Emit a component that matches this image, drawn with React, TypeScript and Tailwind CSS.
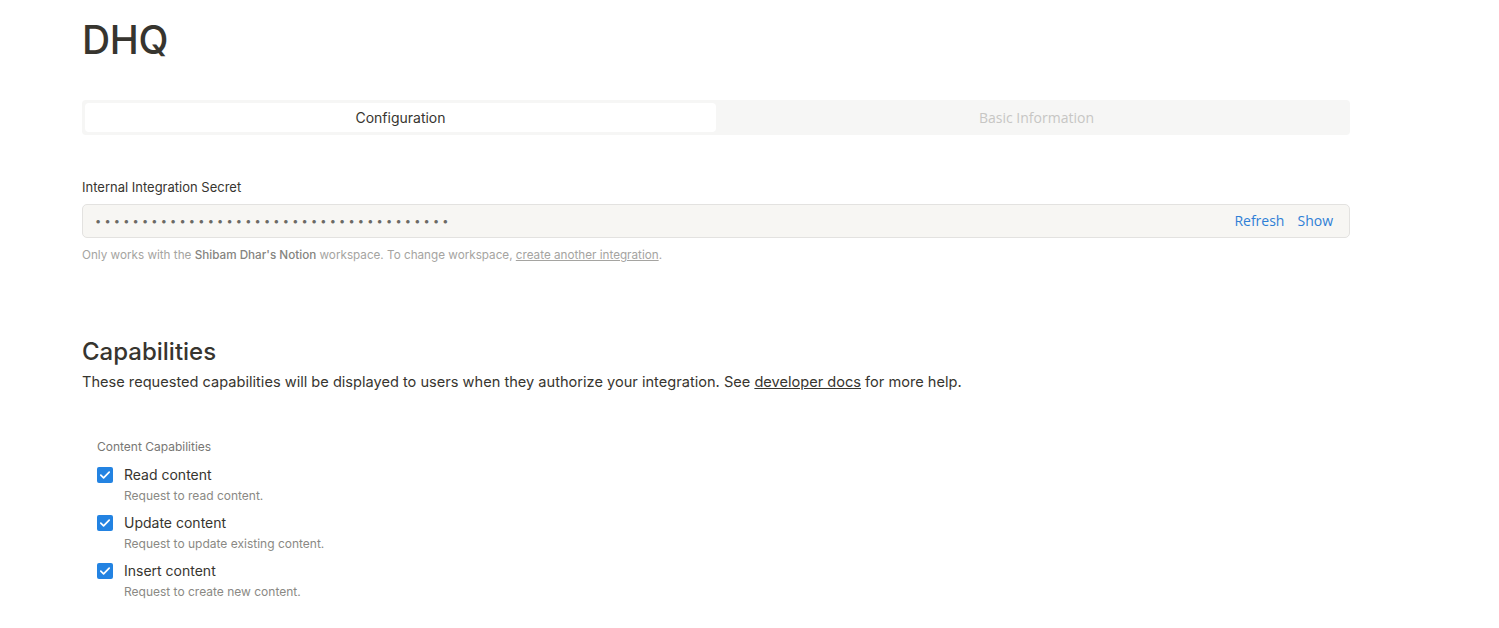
import { useState } from "react";

interface Capability {
  key: string;
  label: string;
  description: string;
}

const contentCapabilities: Capability[] = [
  { key: "read", label: "Read content", description: "Request to read content." },
  { key: "update", label: "Update content", description: "Request to update existing content." },
  { key: "insert", label: "Insert content", description: "Request to create new content." },
];

function CheckIcon() {
  return (
    <svg viewBox="0 0 16 16" className="h-4 w-4">
      <rect width="16" height="16" rx="2" fill="#2383e2" />
      <path d="M3.8 8.2l2.8 2.7 5.6-5.7" fill="none" stroke="#fff" strokeWidth="1.7" strokeLinecap="round" strokeLinejoin="round" />
    </svg>
  );
}

export default function App() {
  const [tab, setTab] = useState("config");
  const [checked, setChecked] = useState<Record<string, boolean>>({ read: true, update: true, insert: true });

  return (
    <div className="min-h-screen bg-white text-[#37352f]" style={{ fontFamily: "Inter, 'Noto Sans', sans-serif" }}>
      <div className="w-[1268px] ml-[82px] pt-[18px]">
        <h1 className="text-[39px] leading-[44px] font-medium tracking-[-0.3px]">DHQ</h1>

        {/* tabs */}
        <div className="mt-[38px] flex h-[35px] rounded-[4px] bg-[#f6f6f5] p-[3px]">
          <button
            onClick={() => setTab("config")}
            className={`flex-1 rounded-[4px] text-[14px] ${tab === "config" ? "bg-white text-[#37352f]" : "text-[#c7c6c4]"}`}
          >
            Configuration
          </button>
          <button
            onClick={() => setTab("basic")}
            className={`flex-1 rounded-[4px] text-[14px] font-['Open_Sans',sans-serif] ${tab === "basic" ? "bg-white text-[#37352f]" : "text-[#c7c6c4]"}`}
          >
            <span className="ml-[10px]">Basic Information</span>
          </button>
        </div>

        {/* secret */}
        <div className="mt-[44px] text-[13px] leading-[16px]">Internal Integration Secret</div>
        <div className="mt-[9px] flex h-[34px] items-center rounded-[5px] border border-[#e3e2e0] bg-[#f7f6f3] pl-[12px] pr-[16px]">
          <span className="flex-1 text-[11px] tracking-[3.2px] text-[#6b6964]">{"•".repeat(38)}</span>
          <div className="flex gap-[13px] pb-[2px] text-[14px] text-[#2f7fd6]" style={{ fontFamily: "'Open Sans', sans-serif" }}>
            <span>Refresh</span>
            <span>Show</span>
          </div>
        </div>
        <p className="mt-[9px] text-[11.7px] leading-[16px] text-[#a5a4a1]">
          Only works with the <span className="font-medium text-[#858480]">Shibam Dhar's Notion</span> workspace. To change workspace,{" "}
          <span className="underline">create another integration</span>.
        </p>

        {/* capabilities */}
        <h2 className="mt-[74px] text-[24px] leading-[30px] font-medium">Capabilities</h2>
        <p className="mt-[4px] text-[14.6px] leading-[22px]">
          These requested capabilities will be displayed to users when they authorize your integration. See{" "}
          <span className="underline">developer docs</span> for more help.
        </p>

        <div className="mt-[46px] pl-[15px]">
          <div className="text-[12px] leading-[16px] text-[#787774]">Content Capabilities</div>
          <div className="mt-[11px] flex flex-col gap-[10px]">
            {contentCapabilities.map((c) => (
              <label key={c.key} className="flex cursor-pointer gap-[11px]" onClick={() => setChecked((p) => ({ ...p, [c.key]: !p[c.key] }))}>
                <div className="pt-[1px]">{checked[c.key] ? <CheckIcon /> : <div className="h-4 w-4 rounded-[2px] border border-[#9b9a97]" />}</div>
                <div>
                  <div className="text-[14px] leading-[18px]">{c.label}</div>
                  <div className="mt-[4px] text-[12px] leading-[16px] text-[#8a8984]">{c.description}</div>
                </div>
              </label>
            ))}
          </div>
          <div className="mt-[28px] text-[12px] leading-[16px] text-[#787774]">Comment Capabilities</div>
        </div>
      </div>
    </div>
  );
}
